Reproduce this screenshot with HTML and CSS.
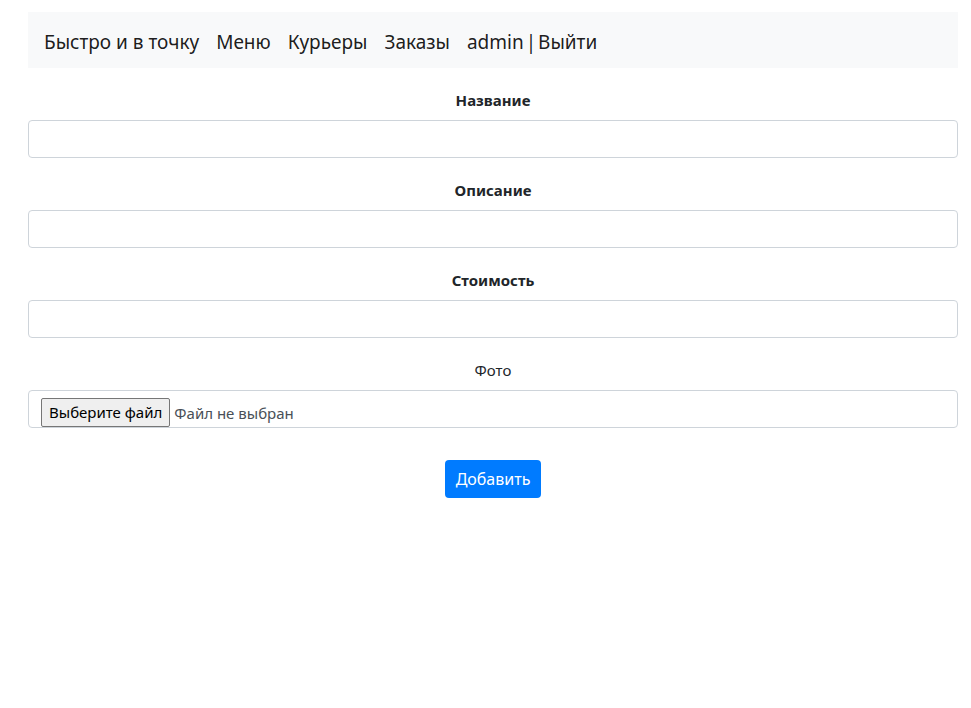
FILE: index.html
```html
<!DOCTYPE html>
<html lang="ru">
<head>
<meta charset="utf-8">
<title>Добавить блюдо</title>
<link rel="stylesheet" href="styles.css">
</head>
<body>
<div class="page">
  <nav class="navbar">
    <a class="nav-item" href="#">Быстро и в точку</a>
    <a class="nav-item" href="#">Меню</a>
    <a class="nav-item" href="#">Курьеры</a>
    <a class="nav-item" href="#">Заказы</a>
    <a class="nav-item nav-user" href="#">admin | Выйти</a>
  </nav>
  <form class="form">
    <div class="group">
      <label class="label bold">Название</label>
      <div class="control"></div>
    </div>
    <div class="group">
      <label class="label bold">Описание</label>
      <div class="control"></div>
    </div>
    <div class="group">
      <label class="label bold">Стоимость</label>
      <div class="control"></div>
    </div>
    <div class="group">
      <label class="label">Фото</label>
      <div class="control file">
        <span class="file-btn">Выберите файл</span>
        <span class="file-text">Файл не выбран</span>
      </div>
    </div>
    <div class="actions">
      <span class="btn">Добавить</span>
    </div>
  </form>
</div>
</body>
</html>
```
FILE: styles.css
```css
html, body {
  margin: 0;
  padding: 0;
  background: #fff;
}
body {
  font-family: "Noto Sans", "Open Sans", sans-serif;
  color: #212529;
}
.page {
  padding: 12px 13px 0 28px;
}
.navbar {
  background: #f8f9fa;
  height: 56px;
  box-sizing: border-box;
  padding: 3px 16px 0;
  display: flex;
  align-items: center;
  gap: 17px;
}
.nav-item {
  font-size: 19px;
  color: rgba(0, 0, 0, 0.9);
  text-decoration: none;
  line-height: 28px;
}
.nav-user {
  word-spacing: -3px;
}
.form {
  padding-top: 20px;
}
.group {
  margin-bottom: 20px;
}
.label {
  display: block;
  text-align: center;
  font-size: 15px;
  line-height: 24px;
  margin-bottom: 8px;
}
.bold {
  font-weight: 700;
}
.control {
  height: 38px;
  box-sizing: border-box;
  border: 1px solid #ced4da;
  border-radius: 4px;
}
.file {
  display: flex;
  align-items: flex-end;
  padding-left: 12px;
}
.file-btn {
  font-size: 15px;
  line-height: 27px;
  padding: 0 7px;
  background: #efefef;
  border: 1px solid #767676;
  border-radius: 2px;
  color: #000;
}
.file-text {
  font-size: 15px;
  line-height: 28px;
  margin-left: 4px;
  color: #495057;
}
.actions {
  display: flex;
  justify-content: center;
  padding-top: 12px;
}
.btn {
  background: #007bff;
  color: #fff;
  font-size: 16px;
  line-height: 24px;
  padding: 7px 11px;
  border-radius: 4px;
}
```
